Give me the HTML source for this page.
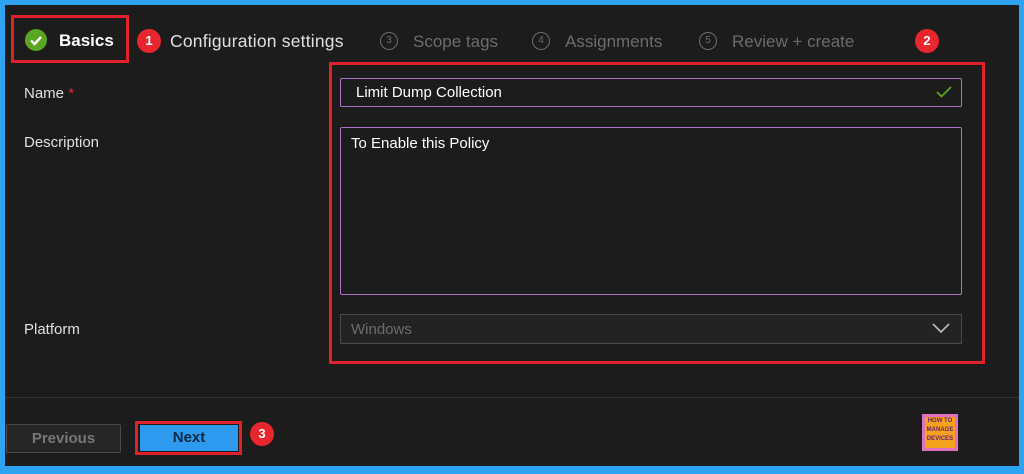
<!DOCTYPE html>
<html><head><style>
body{margin:0;width:1024px;height:474px;background:#2ea3f2;font-family:"Liberation Sans",sans-serif;overflow:hidden;position:relative}
.p{position:absolute;left:5px;top:5px;width:1014px;height:461px;background:#1c1c1c}
.a{position:absolute}
.t{color:#e0e0e0;font-size:16px}
.g{color:#6c6c6c;font-size:17px}
.rb{position:absolute;border:3px solid #e0202a;box-sizing:border-box}
.badge{position:absolute;width:24px;height:24px;border-radius:50%;background:#e8262e;color:#fff;font-size:13px;font-weight:bold;text-align:center;line-height:24px}
.num{position:absolute;width:16px;height:16px;border:1.5px solid #6c6c6c;border-radius:50%;color:#6c6c6c;font-size:10px;text-align:center;line-height:16px}
.inp{position:absolute;border:1px solid #b06fc9;border-radius:2px;background:#1c1c1c;box-sizing:border-box}
</style></head><body>
<div class="p"></div>
<div class="rb" style="left:11px;top:15px;width:118px;height:48px"></div>
<div class="a" style="left:25px;top:29px;width:22px;height:22px;border-radius:50%;background:#5aa521"></div>
<svg class="a" style="left:25px;top:29px" width="22" height="22"><path d="M6 11.5l3.5 3.5 6.5-7" stroke="#fff" stroke-width="2.4" fill="none"/></svg>
<div class="a t" style="left:59px;top:31px;font-weight:bold;font-size:17px;color:#fff">Basics</div>
<div class="badge" style="left:137px;top:29px">1</div>
<div class="a t" style="left:170px;top:31px;font-size:17.5px;letter-spacing:0.2px">Configuration settings</div>
<div class="num" style="left:380px;top:32px">3</div>
<div class="a g" style="left:413px;top:32px">Scope tags</div>
<div class="num" style="left:532px;top:32px">4</div>
<div class="a g" style="left:565px;top:32px">Assignments</div>
<div class="num" style="left:699px;top:32px">5</div>
<div class="a g" style="left:732px;top:32px">Review + create</div>
<div class="badge" style="left:915px;top:29px">2</div>
<div class="a t" style="left:24px;top:85px;font-size:15px">Name <span style="color:#e8262e">*</span></div>
<div class="a t" style="left:24px;top:134px;font-size:15px">Description</div>
<div class="a t" style="left:24px;top:321px;font-size:15px">Platform</div>
<div class="rb" style="left:329px;top:62px;width:656px;height:302px"></div>
<div class="inp" style="left:340px;top:78px;width:622px;height:29px"></div>
<div class="a t" style="left:356px;top:84px;font-size:15px;color:#fff">Limit Dump Collection</div>
<svg class="a" style="left:936px;top:85px" width="16" height="14"><path d="M1 7l4.5 4.5L15 2" stroke="#5aa521" stroke-width="1.8" fill="none"/></svg>
<div class="inp" style="left:340px;top:127px;width:622px;height:168px"></div>
<div class="a t" style="left:351px;top:135px;font-size:15px;color:#fff">To Enable this Policy</div>
<div class="a" style="left:340px;top:314px;width:622px;height:30px;border:1px solid #4a4a4a;box-sizing:border-box;background:#232323"></div>
<div class="a g" style="left:351px;top:321px;font-size:15px">Windows</div>
<svg class="a" style="left:932px;top:323px" width="18" height="11"><path d="M1 1l8 8 8-8" stroke="#bbb" stroke-width="1.6" fill="none"/></svg>
<div class="a" style="left:5px;top:397px;width:1014px;height:1px;background:#333"></div>
<div class="a" style="left:6px;top:424px;width:115px;height:29px;border:1px solid #4a4a4a;border-radius:2px;background:#262626;box-sizing:border-box;color:#777;font-size:15px;text-align:center;line-height:27px;font-weight:bold">Previous</div>
<div class="rb" style="left:135px;top:421px;width:107px;height:34px"></div>
<div class="a" style="left:140px;top:425px;width:98px;height:26px;background:#2d9af0;color:#0f2a44;font-size:15px;font-weight:bold;text-align:center;line-height:26px">Next</div>
<div class="badge" style="left:250px;top:422px">3</div>
<div class="a" style="left:922px;top:414px;width:36px;height:37px;background:#e070c0"></div>
<div class="a" style="left:925px;top:417px;width:30px;height:31px;background:#f4a11e;font-size:6px;color:#6a2070;text-align:center;line-height:9px;font-weight:bold">HOW TO<br>MANAGE<br>DEVICES</div>
</body></html>
